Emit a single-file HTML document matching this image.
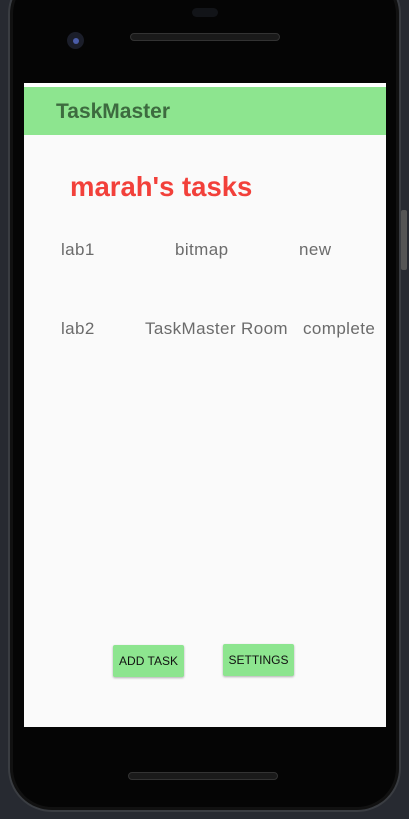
<!DOCTYPE html>
<html><head><meta charset="utf-8"><style>
*{margin:0;padding:0;box-sizing:border-box}
body{width:409px;height:819px;background:#272a31;position:relative;overflow:hidden;font-family:"Liberation Sans",sans-serif}
.phone{position:absolute;left:8px;top:-30px;width:393px;height:842px;background:#050505;border-radius:44px;border:2px solid #3a3d42;box-shadow:inset 0 0 0 3px #111}
.screen{position:absolute;left:24px;top:83px;width:362px;height:644px;background:#fafafa}
.status{height:4px;background:#fff}
.bar{height:48px;background:#8de58f;color:#3d6b3f;font-weight:bold;font-size:21px;line-height:50px;padding-left:32px}
.t{position:absolute;color:#6b6b6b;font-size:17px;letter-spacing:0.4px}
.h{position:absolute;left:46px;top:88px;color:#f2403a;font-weight:bold;font-size:27.5px}
.btn{position:absolute;background:#8de58f;color:#111;font-size:12px;text-align:center;line-height:32px;height:32px;box-shadow:0 1px 2px rgba(0,0,0,.3);border-radius:2px}
.spk{position:absolute;height:8px;border-radius:4px;background:#1a1a1a;border:1px solid #333}
</style></head><body>
<div class="phone"></div>
<div style="position:absolute;left:192px;top:8px;width:26px;height:9px;border-radius:5px;background:#121418"></div>
<div style="position:absolute;left:67px;top:32px;width:17px;height:17px;border-radius:50%;background:#1b1e2a"><div style="position:absolute;left:6px;top:6px;width:6px;height:6px;border-radius:50%;background:#4a5ca8"></div></div>
<div class="spk" style="left:130px;top:33px;width:150px"></div>
<div class="spk" style="left:128px;top:772px;width:150px"></div>
<div style="position:absolute;left:401px;top:210px;width:6px;height:60px;background:#555;border-radius:2px"></div>
<div class="screen">
<div class="status"></div>
<div class="bar">TaskMaster</div>
<div class="h">marah's tasks</div>
<div class="t" style="left:37px;top:157px">lab1</div>
<div class="t" style="left:151px;top:157px">bitmap</div>
<div class="t" style="left:275px;top:157px">new</div>
<div class="t" style="left:37px;top:236px">lab2</div>
<div class="t" style="left:121px;top:236px">TaskMaster Room</div>
<div class="t" style="left:279px;top:236px">complete</div>
<div class="btn" style="left:89px;top:562px;width:71px">ADD TASK</div>
<div class="btn" style="left:199px;top:561px;width:71px">SETTINGS</div>
</div>
</body></html>
